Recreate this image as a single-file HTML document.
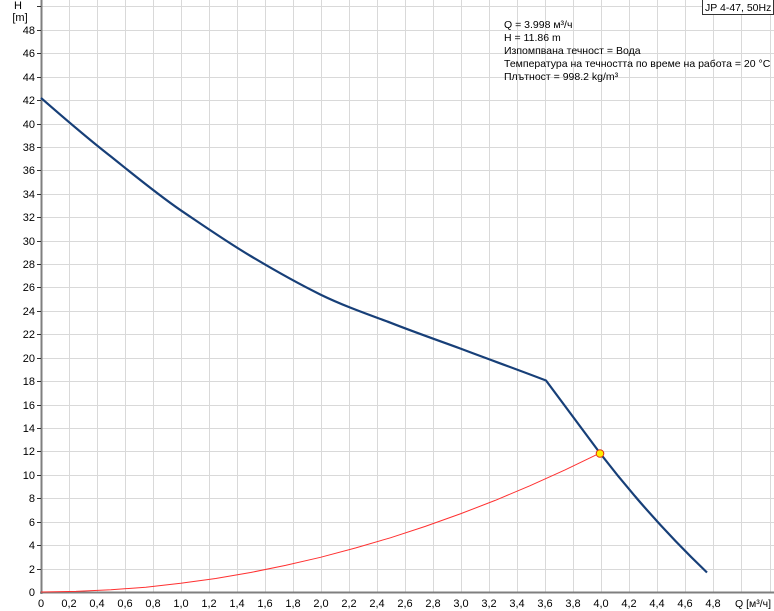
<!DOCTYPE html>
<html><head><meta charset="utf-8"><style>
html,body{margin:0;padding:0;background:#fff;}
svg{display:block;font-family:"Liberation Sans",sans-serif;}
</style></head><body>
<svg width="774" height="611" viewBox="0 0 774 611" xmlns="http://www.w3.org/2000/svg">
<g stroke="#d9d9d9" stroke-width="1">
<line x1="42" y1="6.5" x2="774" y2="6.5"/>
<line x1="42" y1="30.5" x2="774" y2="30.5"/><line x1="42" y1="53.5" x2="774" y2="53.5"/><line x1="42" y1="77.5" x2="774" y2="77.5"/><line x1="42" y1="100.5" x2="774" y2="100.5"/><line x1="42" y1="124.5" x2="774" y2="124.5"/><line x1="42" y1="147.5" x2="774" y2="147.5"/><line x1="42" y1="170.5" x2="774" y2="170.5"/><line x1="42" y1="194.5" x2="774" y2="194.5"/><line x1="42" y1="217.5" x2="774" y2="217.5"/><line x1="42" y1="241.5" x2="774" y2="241.5"/><line x1="42" y1="264.5" x2="774" y2="264.5"/><line x1="42" y1="287.5" x2="774" y2="287.5"/><line x1="42" y1="311.5" x2="774" y2="311.5"/><line x1="42" y1="334.5" x2="774" y2="334.5"/><line x1="42" y1="358.5" x2="774" y2="358.5"/><line x1="42" y1="381.5" x2="774" y2="381.5"/><line x1="42" y1="405.5" x2="774" y2="405.5"/><line x1="42" y1="428.5" x2="774" y2="428.5"/><line x1="42" y1="451.5" x2="774" y2="451.5"/><line x1="42" y1="475.5" x2="774" y2="475.5"/><line x1="42" y1="498.5" x2="774" y2="498.5"/><line x1="42" y1="522.5" x2="774" y2="522.5"/><line x1="42" y1="545.5" x2="774" y2="545.5"/><line x1="42" y1="569.5" x2="774" y2="569.5"/>
<line x1="69.5" y1="0" x2="69.5" y2="592"/><line x1="97.5" y1="0" x2="97.5" y2="592"/><line x1="125.5" y1="0" x2="125.5" y2="592"/><line x1="153.5" y1="0" x2="153.5" y2="592"/><line x1="181.5" y1="0" x2="181.5" y2="592"/><line x1="209.5" y1="0" x2="209.5" y2="592"/><line x1="237.5" y1="0" x2="237.5" y2="592"/><line x1="265.5" y1="0" x2="265.5" y2="592"/><line x1="293.5" y1="0" x2="293.5" y2="592"/><line x1="321.5" y1="0" x2="321.5" y2="592"/><line x1="349.5" y1="0" x2="349.5" y2="592"/><line x1="377.5" y1="0" x2="377.5" y2="592"/><line x1="405.5" y1="0" x2="405.5" y2="592"/><line x1="433.5" y1="0" x2="433.5" y2="592"/><line x1="461.5" y1="0" x2="461.5" y2="592"/><line x1="489.5" y1="0" x2="489.5" y2="592"/><line x1="517.5" y1="0" x2="517.5" y2="592"/><line x1="545.5" y1="0" x2="545.5" y2="592"/><line x1="573.5" y1="0" x2="573.5" y2="592"/><line x1="601.5" y1="0" x2="601.5" y2="592"/><line x1="629.5" y1="0" x2="629.5" y2="592"/><line x1="657.5" y1="0" x2="657.5" y2="592"/><line x1="685.5" y1="0" x2="685.5" y2="592"/><line x1="713.5" y1="0" x2="713.5" y2="592"/><line x1="741.5" y1="0" x2="741.5" y2="592"/><line x1="770.5" y1="0" x2="770.5" y2="592"/>
</g>
<g stroke="#7f7f7f">
<line x1="41.5" y1="0" x2="41.5" y2="594" stroke-width="2"/>
<line x1="40" y1="592.5" x2="774" y2="592.5" stroke-width="2"/>
</g>
<g stroke="#333" stroke-width="1">
<line x1="37" y1="6.5" x2="41" y2="6.5"/><line x1="37" y1="30.5" x2="41" y2="30.5"/><line x1="37" y1="53.5" x2="41" y2="53.5"/><line x1="37" y1="77.5" x2="41" y2="77.5"/><line x1="37" y1="100.5" x2="41" y2="100.5"/><line x1="37" y1="124.5" x2="41" y2="124.5"/><line x1="37" y1="147.5" x2="41" y2="147.5"/><line x1="37" y1="170.5" x2="41" y2="170.5"/><line x1="37" y1="194.5" x2="41" y2="194.5"/><line x1="37" y1="217.5" x2="41" y2="217.5"/><line x1="37" y1="241.5" x2="41" y2="241.5"/><line x1="37" y1="264.5" x2="41" y2="264.5"/><line x1="37" y1="287.5" x2="41" y2="287.5"/><line x1="37" y1="311.5" x2="41" y2="311.5"/><line x1="37" y1="334.5" x2="41" y2="334.5"/><line x1="37" y1="358.5" x2="41" y2="358.5"/><line x1="37" y1="381.5" x2="41" y2="381.5"/><line x1="37" y1="405.5" x2="41" y2="405.5"/><line x1="37" y1="428.5" x2="41" y2="428.5"/><line x1="37" y1="451.5" x2="41" y2="451.5"/><line x1="37" y1="475.5" x2="41" y2="475.5"/><line x1="37" y1="498.5" x2="41" y2="498.5"/><line x1="37" y1="522.5" x2="41" y2="522.5"/><line x1="37" y1="545.5" x2="41" y2="545.5"/><line x1="37" y1="569.5" x2="41" y2="569.5"/>
</g>
<g font-size="11" fill="#000" text-anchor="end">
<text x="35" y="34">48</text><text x="35" y="57">46</text><text x="35" y="81">44</text><text x="35" y="104">42</text><text x="35" y="128">40</text><text x="35" y="151">38</text><text x="35" y="174">36</text><text x="35" y="198">34</text><text x="35" y="221">32</text><text x="35" y="245">30</text><text x="35" y="268">28</text><text x="35" y="291">26</text><text x="35" y="315">24</text><text x="35" y="338">22</text><text x="35" y="362">20</text><text x="35" y="385">18</text><text x="35" y="409">16</text><text x="35" y="432">14</text><text x="35" y="455">12</text><text x="35" y="479">10</text><text x="35" y="502">8</text><text x="35" y="526">6</text><text x="35" y="549">4</text><text x="35" y="573">2</text><text x="35" y="596">0</text>
</g>
<text x="18" y="9" font-size="11" text-anchor="middle">H</text>
<text x="20" y="21" font-size="11" text-anchor="middle">[m]</text>
<g font-size="11" text-anchor="middle">
<text x="41" y="607">0</text><text x="69" y="607">0,2</text><text x="97" y="607">0,4</text><text x="125" y="607">0,6</text><text x="153" y="607">0,8</text><text x="181" y="607">1,0</text><text x="209" y="607">1,2</text><text x="237" y="607">1,4</text><text x="265" y="607">1,6</text><text x="293" y="607">1,8</text><text x="321" y="607">2,0</text><text x="349" y="607">2,2</text><text x="377" y="607">2,4</text><text x="405" y="607">2,6</text><text x="433" y="607">2,8</text><text x="461" y="607">3,0</text><text x="489" y="607">3,2</text><text x="517" y="607">3,4</text><text x="545" y="607">3,6</text><text x="573" y="607">3,8</text><text x="601" y="607">4,0</text><text x="629" y="607">4,2</text><text x="657" y="607">4,4</text><text x="685" y="607">4,6</text><text x="713" y="607">4,8</text>
</g>
<text x="735" y="607" font-size="10.5">Q [м³/ч]</text>
<polyline fill="none" stroke="#ff3030" stroke-width="1" points="41,592 76,591.4 110.9,589.8 145.8,587.2 180.75,583.3 215.7,578.5 250.6,572.5 285.5,565.4 320.5,557.3 355.4,548.0 390.4,537.8 425.3,526.4 460.25,513.9 495.2,500.4 530.1,485.7 565,469.9 600,453.1"/>
<path fill="none" stroke="#173f78" stroke-width="2.2" stroke-linejoin="round" d="M41,97.9 C64,118 87,138 110.9,156.5 C134,175 157,194 180.75,210.3 C204,226 227,242 250.6,256 C274,270 297,283 320.5,294.6 C344,306 367,314 390.4,322.7 C414,332 437,340 460.25,348.5 C488,359 516,369 546,380.5 L600,453.1 Q650,518 707,572.5"/>
<circle cx="600" cy="453.5" r="3.8" fill="#ffef00" stroke="#e03010" stroke-width="1"/>
<g font-size="10.5" fill="#000">
<text x="504" y="28">Q = 3.998 м³/ч</text>
<text x="504" y="41">H = 11.86 m</text>
<text x="504" y="54">Изпомпвана течност = Вода</text>
<text x="504" y="67">Температура на течността по време на работа = 20 °C</text>
<text x="504" y="80">Плътност = 998.2 kg/m³</text>
</g>
<rect x="702.5" y="-1" width="71" height="15.5" fill="#fff" stroke="#333" stroke-width="1"/>
<text x="705" y="11" font-size="10.5">JP 4-47, 50Hz</text>
</svg>
</body></html>
